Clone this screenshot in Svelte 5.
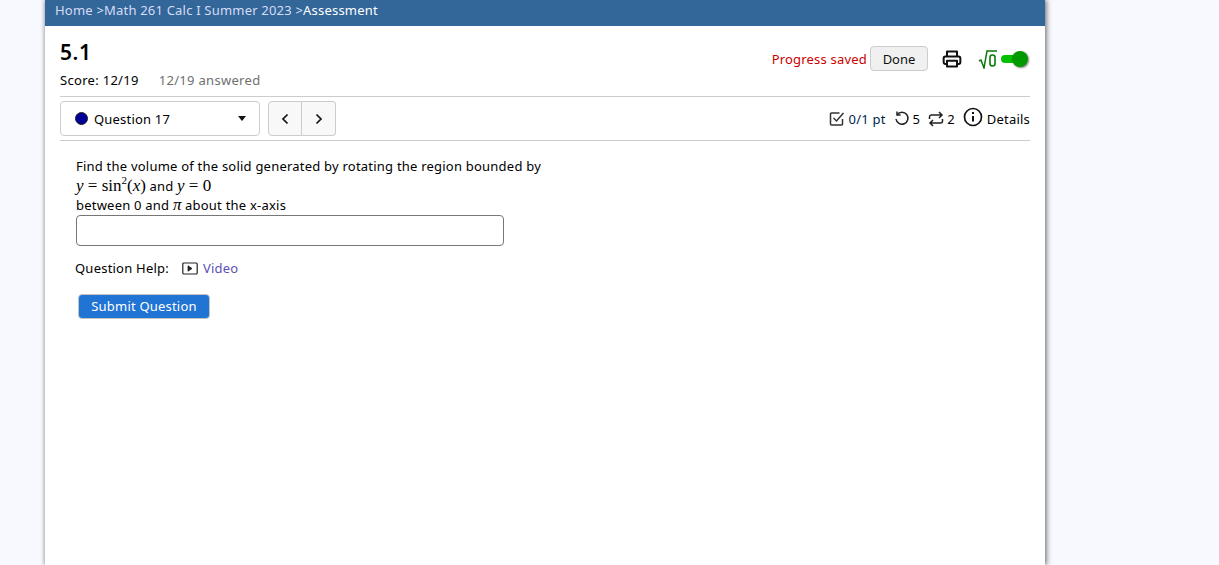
<script>
    let crumbs = ["Home", "Math 261 Calc I Summer 2023"]
</script>

<div class="page">
    <div class="nav">
        {#each crumbs as c}<a href="#top">{c}</a> &gt; {/each}<span class="cur">Assessment</span>
    </div>
    <main>
        <div class="head">
            <div>
                <h1>5.1</h1>
                <div class="score"><span>Score: 12/19</span><span class="answered">12/19 answered</span></div>
            </div>
            <div class="tools">
                <span class="saved">Progress saved</span>
                <button class="done">Done</button>
                <svg class="printer" width="20" height="20" viewBox="0 0 24 24" fill="none" stroke="#111" stroke-width="2.4" stroke-linejoin="round">
                    <path d="M6 9V3h12v6"/>
                    <path d="M6 18H4a2 2 0 0 1-2-2v-5a2 2 0 0 1 2-2h16a2 2 0 0 1 2 2v5a2 2 0 0 1-2 2h-2"/>
                    <path d="M6 14h12v7H6z"/>
                </svg>
                <svg class="root" width="20" height="20" viewBox="0 0 20 20" fill="none" stroke="#0a7a0a">
                    <path d="M1 12l2-1 3 8 3-17h10" stroke-width="1.5"/>
                    <rect x="12" y="6" width="5" height="11" rx="2.4" stroke-width="1.6"/>
                </svg>
                <span class="toggle"><span class="knob"></span></span>
            </div>
        </div>

        <div class="qbar">
            <div class="qselect">
                <span class="dot"></span>
                <span>Question 17</span>
                <span class="caret"></span>
            </div>
            <div class="pager">
                <button aria-label="Previous"><svg width="8" height="12" viewBox="0 0 8 12" fill="none" stroke="#111" stroke-width="1.7"><path d="M6.5 1.5L2 6l4.500 4.500"/></svg></button>
                <button aria-label="Next"><svg width="8" height="12" viewBox="0 0 8 12" fill="none" stroke="#111" stroke-width="1.7"><path d="M1.500 1.500L6 6l-4.500 4.500"/></svg></button>
            </div>
            <div class="meta">
                <svg width="16" height="16" viewBox="0 0 16 16" fill="none" stroke="#333" stroke-width="1.500"><path d="M13.500 8v5a1 1 0 0 1-1 1h-10a1 1 0 0 1-1-1v-10a1 1 0 0 1 1-1h8"/><path d="M4.500 7l3 3 7-8"/></svg>
                <span class="pts">0/1 pt</span>
                <svg class="m1" width="16" height="16" viewBox="0 0 16 16" fill="none" stroke="#222" stroke-width="1.500"><path d="M3.200 3.500A6 6 0 1 1 2 8"/><path d="M3 0.500v3.500h3.600"/></svg>
                <span>5</span>
                <svg class="m1" width="16" height="16" viewBox="0 0 16 16" fill="none" stroke="#222" stroke-width="1.500"><path d="M1.500 8V6a2 2 0 0 1 2-2h10.500M11 1l3 3-3 3"/><path d="M14.500 8v2a2 2 0 0 1-2 2H2M5 9l-3 3 3 3"/></svg>
                <span>2</span>
                <svg class="m1 info" width="20" height="20" viewBox="0 0 20 20" fill="none" stroke="#111" stroke-width="1.700"><circle cx="10" cy="10" r="8.500"/><path d="M10 9v5.500" stroke-width="2"/><path d="M10 5v2" stroke-width="2"/></svg>
                <span>Details</span>
            </div>
        </div>

        <div class="question">
            <div>Find the volume of the solid generated by rotating the region bounded by</div>
            <div class="mathline"><span class="math"><i>y</i> = sin<sup>2</sup>(<i>x</i>)</span> and <span class="math"><i>y</i> = 0</span></div>
            <div>between 0 and <span class="math"><i>π</i></span> about the x-axis</div>
            <input type="text" aria-label="Answer" />
            <div class="help">
                <span>Question Help:</span>
                <svg width="16" height="13" viewBox="0 0 16 13" fill="none" stroke="#222" stroke-width="1.200"><rect x="0.800" y="1" width="14.400" height="11" rx="1"/><path d="M6 3.800v5.400l4-2.700z" fill="#222" stroke-width="0.800"/></svg>
                <a href="#top">Video</a>
            </div>
            <button class="submit">Submit Question</button>
        </div>
    </main>
</div>

<style>
    :global(body) {
        background: #f8f9ff;
        font-family: "Noto Sans", sans-serif;
        font-size: 13px;
        color: #000;
        overflow: hidden;
    }

    .page {
        width: 1000px;
        height: 565px;
        margin-left: 45px;
        background: #fff;
        box-shadow: 2px 0 5px rgba(0,0,0,0.45), -1px 0 4px rgba(0,0,0,0.25);
    }

    .nav {
        height: 26px;
        box-sizing: border-box;
        padding: 2px 10px 0;
        background: #336699;
        color: #dfe6f5;
        line-height: 17px;
        letter-spacing: 0.2px;
    }

    .nav a {
        color: #d5dcf5;
        text-decoration: none;
    }

    .nav .cur {
        color: #fff;
    }

    main {
        padding: 0 15px;
    }

    .head {
        display: flex;
        justify-content: space-between;
        height: 70px;
        border-bottom: 1px solid #ccc;
    }

    h1 {
        margin: 12px 0 0;
        font-size: 21px;
        line-height: 28px;
        font-weight: 600;
        letter-spacing: 0.6px;
    }

    .score {
        margin-top: 4px;
        line-height: 20px;
        letter-spacing: 0.3px;
    }

    .answered {
        margin-left: 20px;
        color: #6f6f6f;
    }

    .tools {
        display: flex;
        align-items: center;
        height: 25px;
        margin-top: 20px;
        margin-right: 3px;
    }

    .saved {
        color: #cc0000;
        letter-spacing: 0.2px;
    }

    .done {
        width: 58px;
        height: 25px;
        margin-left: 3px;
        padding: 0;
        background: #f0f0f0;
        border: 1px solid #ccc;
        border-radius: 4px;
        font: inherit;
        color: #111;
    }

    .printer {
        margin-left: 14px;
    }

    .root {
        margin-left: 16px;
    }

    .toggle {
        position: relative;
        width: 20px;
        height: 8px;
        margin-left: 3px;
        margin-right: 6px;
        background: #00c000;
        border-radius: 4px;
    }

    .knob {
        position: absolute;
        right: -7px;
        top: -4px;
        width: 16px;
        height: 16px;
        background: #009900;
        border-radius: 50%;
        box-shadow: 1px 1px 2px rgba(0,0,0,0.5);
    }

    .qbar {
        display: flex;
        align-items: center;
        height: 43px;
        border-bottom: 1px solid #ccc;
    }

    .qselect {
        display: flex;
        align-items: center;
        box-sizing: border-box;
        width: 200px;
        height: 35px;
        padding: 0 14px;
        background: #fff;
        border: 1px solid #ccc;
        border-radius: 4px;
        letter-spacing: 0.2px;
    }

    .dot {
        width: 11px;
        height: 11px;
        margin-right: 6px;
        background: #000099;
        border: 1px solid #222;
        border-radius: 50%;
    }

    .caret {
        margin-left: auto;
        margin-right: -1px;
        border: 4px solid transparent;
        border-top: 5px solid #111;
        border-bottom: 0;
    }

    .pager {
        display: flex;
        height: 35px;
        margin-left: 8px;
    }

    .pager button {
        display: flex;
        align-items: center;
        justify-content: center;
        box-sizing: border-box;
        width: 34px;
        padding: 0;
        background: #f8f8f8;
        border: 1px solid #ccc;
    }

    .pager button:first-child {
        border-radius: 4px 0 0 4px;
    }

    .pager button:last-child {
        border-left: 0;
        border-radius: 0 4px 4px 0;
    }

    .meta {
        display: flex;
        align-items: center;
        margin-left: auto;
        gap: 3px;
        letter-spacing: 0.2px;
    }

    .pts {
        margin-left: 1px;
        color: #00264d;
    }

    .m1 {
        margin-left: 5px;
    }

    .info {
        margin-bottom: 4px;
        margin-right: 1px;
    }

    .question {
        padding: 16px 0 0 16px;
        line-height: 19px;
        letter-spacing: 0.22px;
    }

    .math {
        font-family: "Liberation Serif", serif;
        font-size: 17px;
        letter-spacing: 0;
    }

    .math sup {
        font-size: 11px;
        line-height: 0;
    }

    .mathline {
        height: 19px;
    }

    input {
        display: block;
        box-sizing: border-box;
        width: 428px;
        height: 31px;
        margin: 0;
        border: 1px solid #777;
        border-radius: 4px;
        background: #fff;
    }

    .help {
        display: flex;
        align-items: center;
        margin: 13px 0 0 -1px;
    }

    .help svg {
        margin-left: 13px;
        margin-right: 5px;
    }

    .help a {
        color: #5b50b5;
        text-decoration: none;
    }

    .submit {
        display: block;
        width: 132px;
        height: 25px;
        margin: 16px 0 0 2px;
        padding: 0;
        background: #1f74d4;
        border: 1px solid #c4c4c4;
        border-radius: 4px;
        color: #fff;
        font: inherit;
        letter-spacing: 0.2px;
    }
</style>
